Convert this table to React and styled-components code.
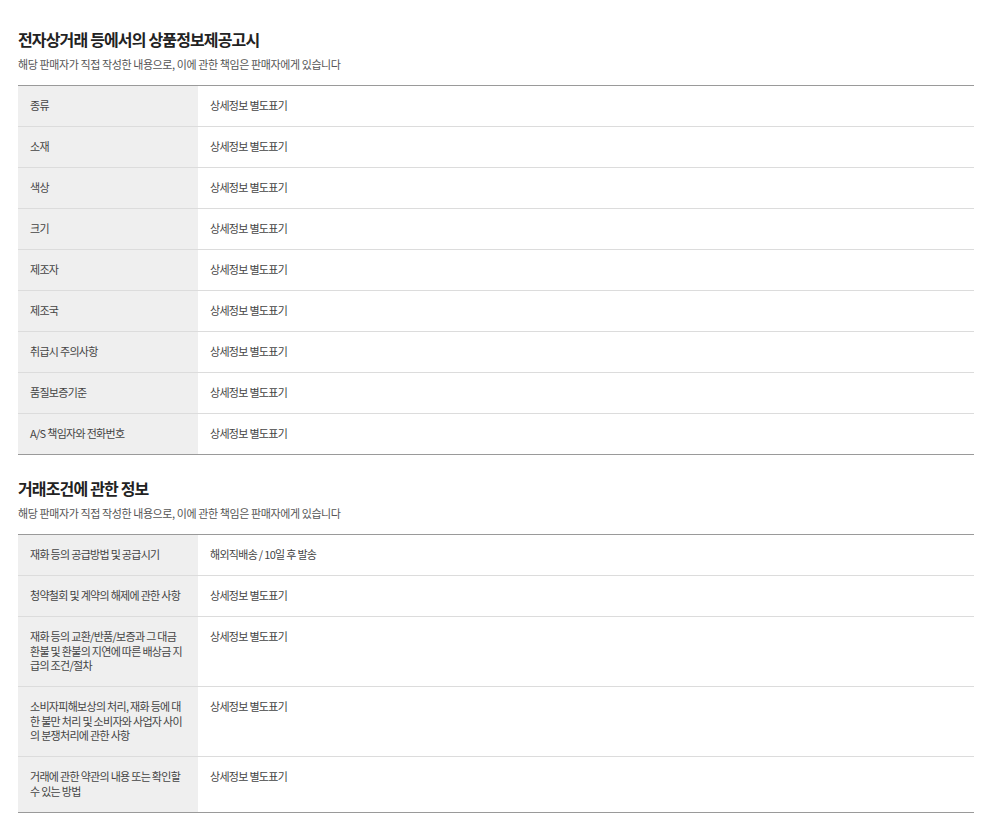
import React from 'react';
import styled, { createGlobalStyle } from 'styled-components';

const GlobalStyle = createGlobalStyle`
  body {
    margin: 0;
    background: #fff;
    font-family: "Noto Sans CJK KR", "Noto Sans", sans-serif;
  }
`;

const Page = styled.div`
  width: 956px;
  padding: 28px 15px 14px 18px;
`;

const Section = styled.section`
  & + & {
    margin-top: 22px;
  }
`;

const Title = styled.h2`
  margin: 0;
  font-size: 16px;
  line-height: 22px;
  font-weight: 700;
  letter-spacing: -0.85px;
  color: #222;
`;

const Subtitle = styled.p`
  margin: 7px 0 14px;
  font-size: 11px;
  line-height: 14px;
  letter-spacing: -0.4px;
  color: #555;
`;

const InfoTable = styled.div`
  border-top: 1px solid #9a9a9a;
  border-bottom: 1px solid #9a9a9a;
`;

const Row = styled.div`
  display: grid;
  grid-template-columns: 180px 1fr;
  & + & {
    border-top: 1px solid #dcdcdc;
  }
`;

const Cell = styled.div`
  padding: 12px 12px 13.5px;
  font-size: 11px;
  line-height: 14.5px;
  letter-spacing: -0.7px;
  color: #444;
  background: ${(p) => (p.$head ? '#efefef' : '#fff')};
  word-break: break-all;
`;

const DETAIL = '상세정보 별도표기';

const productRows = [
  ['종류', DETAIL],
  ['소재', DETAIL],
  ['색상', DETAIL],
  ['크기', DETAIL],
  ['제조자', DETAIL],
  ['제조국', DETAIL],
  ['취급시 주의사항', DETAIL],
  ['품질보증기준', DETAIL],
  ['A/S 책임자와 전화번호', DETAIL],
];

const tradeRows = [
  ['재화 등의 공급방법 및 공급시기', '해외직배송 / 10일 후 발송'],
  ['청약철회 및 계약의 해제에 관한 사항', DETAIL],
  ['재화 등의 교환/반품/보증과 그 대금 환불 및 환불의 지연에 따른 배상금 지급의 조건/절차', DETAIL],
  ['소비자피해보상의 처리, 재화 등에 대한 불만 처리 및 소비자와 사업자 사이의 분쟁처리에 관한 사항', DETAIL],
  ['거래에 관한 약관의 내용 또는 확인할 수 있는 방법', DETAIL],
];

const NOTE = '해당 판매자가 직접 작성한 내용으로, 이에 관한 책임은 판매자에게 있습니다';

function InfoSection({ title, rows }) {
  return (
    <Section>
      <Title>{title}</Title>
      <Subtitle>{NOTE}</Subtitle>
      <InfoTable>
        {rows.map(([label, value]) => (
          <Row key={label}>
            <Cell $head>{label}</Cell>
            <Cell>{value}</Cell>
          </Row>
        ))}
      </InfoTable>
    </Section>
  );
}

export default function App() {
  return (
    <Page>
      <GlobalStyle />
      <InfoSection title="전자상거래 등에서의 상품정보제공고시" rows={productRows} />
      <InfoSection title="거래조건에 관한 정보" rows={tradeRows} />
    </Page>
  );
}
